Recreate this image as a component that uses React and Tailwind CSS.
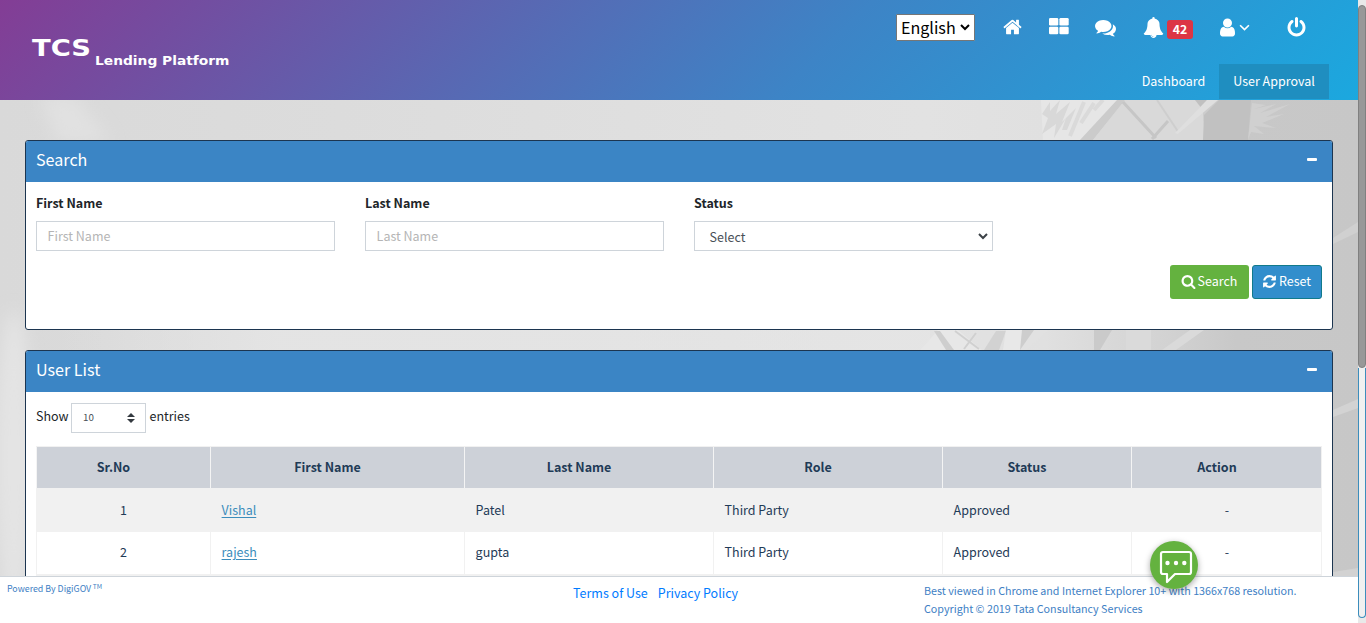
import React from "react";

const ICONS = {
  home: "M1472 992v480q0 26-19 45t-45 19h-384v-384h-256v384h-384q-26 0-45-19t-19-45v-480q0-1 .5-3t.5-3l575-474 575 474q1 2 1 6zm223-69l-62 74q-8 9-21 11h-3q-13 0-21-7l-692-577-692 577q-12 8-24 7-13-2-21-11l-62-74q-8-10-7-23.5t11-21.5l719-599q32-26 76-26t76 26l244 204v-195q0-14 9-23t23-9h192q14 0 23 9t9 23v408l219 182q10 8 11 21.5t-7 23.5z",
  comments: "M1408 768q0 139-94 257t-256.5 186.5-353.5 68.5q-86 0-176-16-124 88-278 128-36 9-86 16h-3q-11 0-20.5-8t-11.5-21q-1-3-1-6.5t.5-6.5 2-6l2.5-5 3.5-5.5 4-5 4.5-5 4-4.5q5-6 23-25t26-29.5 22.5-29 25-38.5 20.5-44q-124-72-195-177t-71-224q0-139 94-257t256.5-186.5 353.5-68.5 353.5 68.5 256.5 186.5 94 257zm384 256q0 120-71 224.5t-195 176.5q10 24 20.5 44t25 38.5 22.5 29 26 29.5 23 25q1 1 4 4.5t4.5 5 4 5 3.5 5.5l2.5 5 2 6 .5 6.5-1 6.5q-3 14-13 22t-22 7q-50-7-86-16-154-40-278-128-90 16-176 16-271 0-472-132 58 4 88 4 161 0 309-45t264-129q125-92 192-212t67-254q0-77-23-152 129 71 204 178t75 230z",
  bell: "M912 1696q0-16-16-16-59 0-101.5-42.5t-42.5-101.5q0-16-16-16t-16 16q0 73 51.5 124.5t124.5 51.5q16 0 16-16zm816-288q0 52-38 90t-90 38h-448q0 106-75 181t-181 75-181-75-75-181h-448q-52 0-90-38t-38-90q50-42 91-88t85-119.5 74.5-158.5 50-206 19.5-260q0-152 117-282.5t307-158.5q-8-19-8-39 0-40 28-68t68-28 68 28 28 68q0 20-8 39 190 28 307 158.5t117 282.5q0 139 19.5 260t50 206 74.5 158.5 85 119.5 91 88z",
  user: "M1536 1399q0 109-62.5 187t-150.5 78h-854q-88 0-150.5-78t-62.5-187q0-85 8.5-160.5t31.5-152 58.5-131 94-89 134.5-34.5q131 128 313 128t313-128q76 0 134.5 34.5t94 89 58.5 131 31.5 152 8.5 160.5zm-256-887q0 159-112.5 271.5t-271.5 112.5-271.5-112.5-112.5-271.5 112.5-271.5 271.5-112.5 271.5 112.5 112.5 271.5z",
  power: "M1664 896q0 156-61 298t-164 245-245 164-298 61-298-61-245-164-164-245-61-298q0-182 80.5-343t226.5-270q43-32 95.5-25t83.5 50q32 42 24.5 94.5t-49.5 84.5q-98 74-151.5 181t-53.5 228q0 104 40.5 198.5t109.5 163.5 163.5 109.5 198.5 40.5 198.5-40.5 163.5-109.5 109.5-163.5 40.5-198.5q0-121-53.5-228t-151.5-181q-42-32-49.5-84.5t24.5-94.5q31-43 84-50t95 25q146 109 226.5 270t80.5 343zm-640-768v640q0 52-38 90t-90 38-90-38-38-90v-640q0-52 38-90t90-38 90 38 38 90z",
  search: "M1216 832q0-185-131.5-316.5t-316.5-131.5-316.5 131.5-131.5 316.5 131.5 316.5 316.5 131.5 316.5-131.5 131.5-316.5zm512 832q0 52-38 90t-90 38q-54 0-90-38l-343-342q-179 124-399 124-143 0-273.5-55.5t-225-150-150-225-55.5-273.5 55.5-273.5 150-225 225-150 273.5-55.5 273.5 55.5 225 150 150 225 55.5 273.5q0 220-124 399l343 343q37 37 37 90z",
  refresh: "M1639 1056q0 5-1 7-64 268-268 434.5t-478 166.5q-146 0-282.5-55t-243.5-157l-129 129q-19 19-45 19t-45-19-19-45v-448q0-26 19-45t45-19h448q26 0 45 19t19 45-19 45l-137 137q71 66 161 102t187 36q134 0 250-65t186-179q11-17 53-117 8-23 30-23h192q13 0 22.5 9.5t9.5 22.5zm25-800v448q0 26-19 45t-45 19h-448q-26 0-45-19t-19-45 19-45l138-138q-148-137-349-137-134 0-250 65t-186 179q-11 17-53 117-8 23-30 23h-199q-13 0-22.5-9.5t-9.5-22.5v-7q65-268 270-434.5t480-166.5q146 0 284 55.5t245 156.5l130-129q19-19 45-19t45 19 19 45z",
};

function Icon({ name, className }) {
  return (
    <svg viewBox="0 0 1792 1792" fill="currentColor" className={`shrink-0 ${className}`}>
      <path d={ICONS[name]} />
    </svg>
  );
}

function Chevron({ className, weight = 2 }) {
  return (
    <svg viewBox="0 0 10 7" fill="none" stroke="currentColor" strokeWidth={weight} className={`shrink-0 ${className}`}>
      <path d="M1 1l4 4 4-4" />
    </svg>
  );
}

function Logo() {
  return (
    <svg width="210" height="50" viewBox="0 0 210 50" fill="#fff" className="font-['DejaVu_Sans'] font-bold">
      <text x="1" y="30" fontSize="23.5" textLength="59" lengthAdjust="spacingAndGlyphs">TCS</text>
      <text x="64" y="39" fontSize="12" textLength="134.5" lengthAdjust="spacingAndGlyphs">Lending Platform</text>
    </svg>
  );
}

function Header() {
  return (
    <header className="flex h-[100px] shrink-0 justify-between bg-[linear-gradient(135deg,#833d95_0%,#3d84c6_60%,#1ba8df_100%)] text-white">
      <div className="pt-[26px] pl-[31px]">
        <Logo />
      </div>
      <div className="flex flex-col items-end justify-between">
        <div className="flex h-[54px] items-center">
          <button className="flex h-[27px] w-[79px] items-center justify-between rounded-[1px] border border-[#767676] bg-white px-[4px] text-[16.1px] text-black">
            English
            <Chevron className="h-[7px] w-[10px]" />
          </button>
          <Icon name="home" className="ml-[27px] h-[20px] w-[21px]" />
          <svg viewBox="0 0 20 17" fill="currentColor" className="mb-[2px] ml-[26px] h-[17px] w-[20px]">
            <rect x="0" y="0" width="9.3" height="7.6" rx="1.3" />
            <rect x="10.4" y="0" width="9.3" height="7.6" rx="1.3" />
            <rect x="0" y="8.7" width="9.3" height="7.6" rx="1.3" />
            <rect x="10.4" y="8.7" width="9.3" height="7.6" rx="1.3" />
          </svg>
          <Icon name="comments" className="ml-[26px] h-[21px] w-[21px]" />
          <Icon name="bell" className="ml-[27px] h-[21px] w-[21px]" />
          <span className="mt-[5px] ml-[3px] flex h-[19px] w-[26px] items-center justify-center rounded-[3px] bg-[#dc3545] pb-px text-[12.3px] font-bold">42</span>
          <Icon name="user" className="ml-[24px] h-[21px] w-[21px]" />
          <Chevron className="mt-[2px] ml-px h-[8px] w-[11px]" weight={1.5} />
          <Icon name="power" className="mr-[51px] ml-[36px] h-[21px] w-[21px]" />
        </div>
        <nav className="mr-[29px] mb-px flex h-[35px] text-[12.5px]">
          <a className="flex w-[91px] items-center justify-center pb-[2px]">Dashboard</a>
          <a className="flex w-[110px] items-center justify-center bg-[#1f8ec0] pb-[2px]">User Approval</a>
        </nav>
      </div>
    </header>
  );
}

function Backdrop() {
  return (
    <svg viewBox="0 0 1358 476" preserveAspectRatio="none" className="absolute inset-0 h-full w-full">
      <defs>
        <linearGradient id="sky" x1="0" x2="1">
          <stop offset="0" stopColor="#d9d9d9" />
          <stop offset="0.25" stopColor="#dcdcdc" />
          <stop offset="0.68" stopColor="#e2e2e2" />
          <stop offset="0.77" stopColor="#e0e0e0" />
          <stop offset="0.86" stopColor="#d2d2d2" />
          <stop offset="0.91" stopColor="#c8c8c8" />
          <stop offset="1" stopColor="#c7c7c7" />
        </linearGradient>
        <linearGradient id="haze" x1="0" x2="1">
          <stop offset="0" stopColor="#e6e6e6" stopOpacity="0" />
          <stop offset="0.25" stopColor="#e6e6e6" stopOpacity="0.8" />
          <stop offset="1" stopColor="#e6e6e6" stopOpacity="0.6" />
        </linearGradient>
        <filter id="soft" x="-50%" y="-50%" width="200%" height="200%">
          <feGaussianBlur stdDeviation="8" />
        </filter>
      </defs>
      <rect width="1358" height="476" fill="url(#sky)" />
      <g filter="url(#soft)">
        <path d="M40 -4h35l35 46H58z" fill="#e1e1e1" />
        <ellipse cx="14" cy="360" rx="18" ry="150" fill="#e4e4e4" />
      </g>
      <rect x="60" y="225" width="870" height="30" fill="url(#haze)" />

      <path d="M1041 0h77l-36 40h-39z" fill="#e6e6e6" />
      <path d="M1042 14l8-12v9l10-11-4 14 14-12-8 20 14-14-9 22h-5l4-12-12 20 2-14-14 10 6-16z" fill="#d8d8d8" />
      <path d="M1084 2l-14 34M1094 3l-13 20M1103 0l-9 10" stroke="#dadada" strokeWidth="4" />
      <path d="M1117 0h8l-32 40h-13z" fill="#cbcbcb" />
      <path d="M1125 0h78v14l2 26h-112z" fill="#d9d9d9" />
      <path d="M1123 2l33 36M1168 21l-16 18" stroke="#c6c6c6" strokeWidth="3" fill="none" />
      <path d="M1157 0l22 33" stroke="#cecece" strokeWidth="2" fill="none" />
      <path d="M1195 0h12l-5 9z" fill="#c0c0c0" />
      <path d="M1204 15l15-15h32l-3 40h-45z" fill="#c1c1c1" />
      <path d="M1207 0h11l-40 34-3-1z" fill="#dfdfdf" />
      <path d="M1252 3l14 2-12 4 22-5-16 9 30-9-24 13 18-3-22 9 14 5-22-2 10 8-13-2-3 8z" fill="#d0d0d0" />

      <path d="M920 250l18-20h20l24 20z" fill="#e7e7e7" />
      <path d="M934 231h6l14 19h-8z" fill="#cecece" />
      <path d="M955 231l24 18M976 233l-12 16" stroke="#d0d0d0" strokeWidth="2" />
      <path d="M984 250l12-19h10l-7 19z" fill="#d2d2d2" />
      <path d="M1006 230h16v20h-19z" fill="#e8e8e8" />
      <path d="M1022 230h14l-14 20h-2z" fill="#cdcdcd" />
      <path d="M1034 230h14l-22 20h-6z" fill="#e1e1e1" />
      <path d="M1094 230h18l-12 20h-6z" fill="#cacaca" />
      <path d="M1126 230h25v20h-25z" fill="#dadada" />
      <path d="M1190 230h14l-28 20h-14z" fill="#dadada" />

      <path d="M1333 138l25-16v10l-25 12z" fill="#d0d0d0" />
      <path d="M1333 310l25-11v9l-25 9z" fill="#d3d3d3" />
      <path d="M1333 472l25-4v8h-25z" fill="#d2d2d2" />
    </svg>
  );
}

function Panel({ title, className, children }) {
  return (
    <section className={`relative flex flex-col overflow-hidden border border-[#1c3550] bg-white ${className}`}>
      <div className="flex h-[41px] shrink-0 items-center justify-between bg-[#3b85c5] pr-[15px] pb-[4px] pl-[10px] text-[16.1px] text-white">
        <h2 className="h-[21px]">{title}</h2>
        <span className="h-[3px] w-[10px] rounded-[1px] bg-white" />
      </div>
      {children}
    </section>
  );
}

function Field({ label, children }) {
  return (
    <div className="flex w-[299px] flex-col">
      <label className="flex h-[20px] items-center font-bold text-[#212529]">{label}</label>
      <div className="mt-[8px] flex h-[30px] items-center justify-between border border-[#ced4da] bg-white pl-[10.6px]">
        {children}
      </div>
    </div>
  );
}

function SearchPanel() {
  return (
    <Panel title="Search" className="h-[190px] shrink-0 rounded-[3px]">
      <div className="flex gap-[30px] px-[10px] pt-[11px]">
        <Field label="First Name"><span className="text-[#b5b5b5]">First Name</span></Field>
        <Field label="Last Name"><span className="text-[#b5b5b5]">Last Name</span></Field>
        <Field label="Status">
          <span className="pt-px pl-[4px] text-[#495057]">Select</span>
          <Chevron className="mr-[4px] h-[7px] w-[10px] text-[#3c4247]" />
        </Field>
      </div>
      <div className="mt-[14px] flex justify-end gap-[3px] pr-[10px] text-white">
        <button className="flex h-[34px] w-[79px] items-center justify-center gap-[2px] rounded-[3px] bg-[#64b23f] pr-px pb-[2px]">
          <Icon name="search" className="mt-px h-[15px] w-[15px]" />Search
        </button>
        <button className="flex h-[34px] w-[70px] items-center justify-center gap-[2px] rounded-[3px] border border-[#117a8b] bg-[#328ecc] pr-px pb-[2px]">
          <Icon name="refresh" className="mt-px h-[15px] w-[15px]" />Reset
        </button>
      </div>
    </Panel>
  );
}

const GRID = "grid grid-cols-[174px_254px_249px_229px_189px_191px]";
const HEADS = ["Sr.No", "First Name", "Last Name", "Role", "Status", "Action"];
const ROWS = [
  ["1", "Vishal", "Patel", "Third Party", "Approved", "-"],
  ["2", "rajesh", "gupta", "Third Party", "Approved", "-"],
];
const ROW_STYLES = ["h-[43px] bg-[#f1f1f1]", "h-[42px] bg-white"];
const CELL_STYLES = [
  "justify-center",
  "pl-[10.6px] text-[#3c8dbc] underline underline-offset-2",
  "pl-[10.6px]",
  "pl-[10.6px]",
  "pl-[10.6px]",
  "justify-center",
];

function UserTable() {
  return (
    <div className="mx-[10px] mt-[13px] border-t border-r border-[#f1f1f1] text-[#1f3b57]">
      <div className={`${GRID} h-[42px] border-b border-[#f1f1f1] bg-[#cdd1d8] font-bold`}>
        {HEADS.map((h) => (
          <div key={h} className="flex items-center justify-center border-l border-[#f4f4f4] pr-[20px] pb-[2px]">{h}</div>
        ))}
      </div>
      {ROWS.map((row, r) => (
        <div key={row[0]} className={`${GRID} ${ROW_STYLES[r]}`}>
          {row.map((value, c) => (
            <div key={c} className={`flex items-center border-l border-[#f1f1f1] pb-[2px] ${CELL_STYLES[c]}`}>{value}</div>
          ))}
        </div>
      ))}
      <div className="h-[43px] bg-[#f1f1f1]" />
    </div>
  );
}

function UserListPanel() {
  return (
    <Panel title="User List" className="h-[300px] shrink-0 rounded-t-[3px]">
      <div className="mt-[11px] flex h-[30px] items-center px-[10px] text-[#212529]">
        <span className="w-[35px] pb-[4px]">Show</span>
        <div className="mr-[3.5px] flex h-[30px] w-[75px] items-center justify-between border border-[#ced4da] pr-[10px] pb-[2px] pl-[11px] text-[9.8px] text-[#495057]">
          10
          <svg viewBox="0 0 8 10" fill="#343a40" className="mt-[2px] h-[10px] w-[8px]">
            <path d="M0 4l4-4 4 4zM0 6l4 4 4-4z" />
          </svg>
        </div>
        <span className="pb-[4px]">entries</span>
      </div>
      <UserTable />
    </Panel>
  );
}

function Footer() {
  return (
    <footer className="flex h-[47px] shrink-0 border-t border-[#ced4da] bg-white text-[#4080c4]">
      <div className="w-[573px] pt-[4px] pl-[7px] text-[8.85px] leading-[16px]">
        Powered By DigiGOV<sup className="ml-[1.5px] text-[6.6px]">TM</sup>
      </div>
      <div className="flex w-[351px] gap-[10px] pt-[6px] text-[12.5px] leading-[20px] text-[#007bff]">
        <a>Terms of Use</a>
        <a>Privacy Policy</a>
      </div>
      <div className="pt-[5px] text-[10.72px] leading-[18px] whitespace-nowrap">
        <p>Best viewed in Chrome and Internet Explorer 10+ with 1366x768 resolution.</p>
        <p>Copyright © 2019 Tata Consultancy Services</p>
      </div>
    </footer>
  );
}

function ChatButton() {
  return (
    <button className="absolute top-[541px] left-[1150px] flex h-[48px] w-[48px] items-center justify-center rounded-full bg-[#64b23f] shadow-[0_2px_6px_rgba(0,0,0,0.35)]">
      <svg viewBox="0 0 48 48" fill="none" className="h-[48px] w-[48px]">
        <path d="M13 11h26a2 2 0 0 1 2 2v18a2 2 0 0 1-2 2H25l-8 8v-8h-4a2 2 0 0 1-2-2V13a2 2 0 0 1 2-2z" stroke="#fff" strokeWidth="2.2" strokeLinejoin="round" />
        <circle cx="17.5" cy="22" r="2.2" fill="#fff" />
        <circle cx="26" cy="22" r="2.2" fill="#fff" />
        <circle cx="34.3" cy="22" r="2.2" fill="#fff" />
      </svg>
    </button>
  );
}

function Scrollbar() {
  return (
    <div className="flex w-[8px] shrink-0 flex-col bg-[#e9e9e9] pt-[5px] pb-[5px]">
      <div className="h-[363px] rounded-[4px] border border-[#808080] bg-[#989898]" />
      <div className="flex-1 rounded-b-[4px] border border-t-0 border-[#3c8dbc] bg-[#f0f0f0]" />
    </div>
  );
}

export default function App() {
  return (
    <div className="relative flex h-[623px] w-[1366px] overflow-hidden font-['Noto_Sans_CJK_SC','Noto_Sans',sans-serif] text-[12.5px] leading-[20px]">
      <div className="flex w-[1358px] flex-col">
        <Header />
        <main className="relative flex h-[476px] shrink-0 flex-col gap-[20px] overflow-hidden pt-[40px] pr-[25px] pl-[25px]">
          <Backdrop />
          <SearchPanel />
          <UserListPanel />
        </main>
        <Footer />
      </div>
      <Scrollbar />
      <ChatButton />
    </div>
  );
}
